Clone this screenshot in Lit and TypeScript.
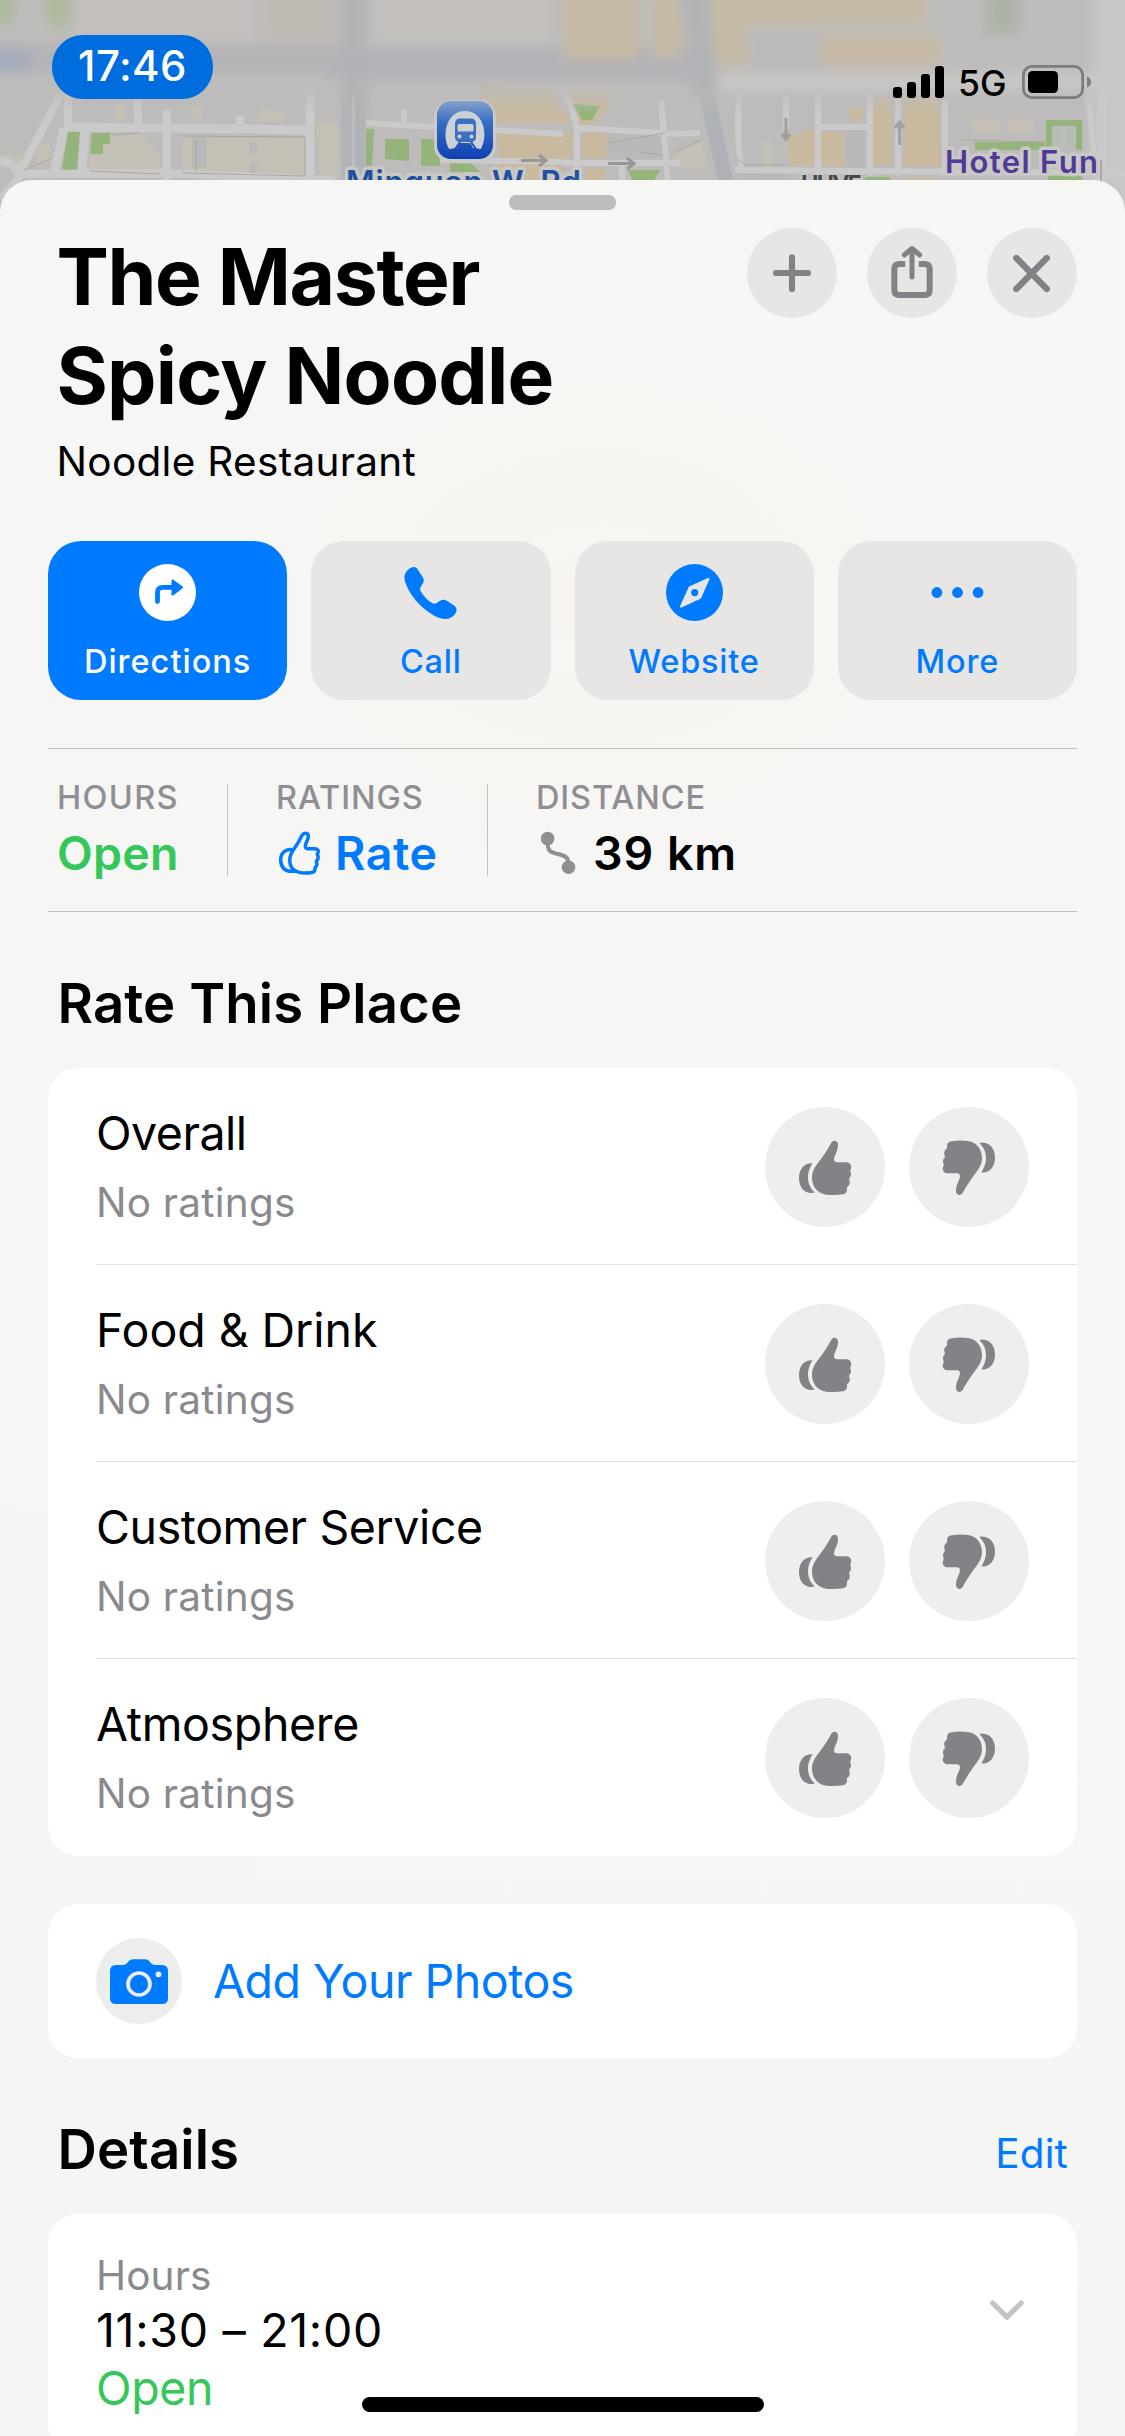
import { LitElement, html, css, svg } from 'lit';
import { customElement, property } from 'lit/decorators.js';

const THUMB = svg`
  <path d="M319 248C323 240 339 239 339 255C339 274 328 285 327 298Q327 306 336 307H364C376 307 381 318 378 326Q375 331 376 334C380 342 378 350 374 353Q371 356 373 360C376 368 374 375 369 379Q364 382 366 386C366 398 361 401 352 403Q330 407 303 404C275 400 261 378 261 352C261 330 275 315 285 301C298 283 310 265 319 248Z"/>
  <path d="M263 310C238 307 222 328 222 354C222 380 236 399 258 399Q266 400 269 397C255 385 249 370 249 352C249 335 256 320 263 310Z"/>`;

const ICONS: Record<string, unknown> = {
  directions: svg`<svg viewBox="138.9 564 57 57" width="57" height="57">
    <circle cx="167.4" cy="592.5" r="28.5" fill="#fff"/>
    <path d="M157.4 601.5V592.5Q157.4 587.4 162.5 587.4H173" fill="none" stroke="#007aff" stroke-width="4.8" stroke-linecap="round"/>
    <path d="M172.6 580.6V594.4L181.8 587.4Z" fill="#007aff" stroke="#007aff" stroke-width="2.4" stroke-linejoin="round"/></svg>`,
  call: svg`<svg viewBox="402.4 564 57 57" width="57" height="57">
    <path fill="#007aff" d="M410 568.5C412.8 566.3 416.3 566.5 418 569.3L423.2 577.2C424.6 579.5 424.6 581.3 423 584L420.9 587.3Q420 589 421 591.2C424.5 597 429 601.5 434 603.7Q436 604.3 437.8 602.6L440 601C442.8 599.2 445.2 599.4 447.6 601L454.8 605.8C457.4 607.8 457.6 611 455.8 613.6C452.3 618.9 446.5 620.3 440 618C430 614.3 419 605.5 411.8 594.5C407.5 588 405 581.5 404.9 578C404.7 574 407 570.6 410 568.5Z"/></svg>`,
  website: svg`<svg viewBox="665.6 564 57 57" width="57" height="57">
    <circle cx="694.1" cy="592.5" r="28.5" fill="#007aff"/>
    <path d="M708 579L689.2 587.6L680.6 606.6L699.6 597.8Z" fill="#e7e6e4" stroke="#e7e6e4" stroke-width="2.2" stroke-linejoin="round"/>
    <circle cx="694.3" cy="592.6" r="3.6" fill="#007aff"/></svg>`,
  more: svg`<svg viewBox="928.5 564 57 57" width="57" height="57" fill="#007aff">
    <circle cx="936.4" cy="592.5" r="5.4"/><circle cx="957" cy="592.5" r="5.4"/><circle cx="977.6" cy="592.5" r="5.4"/></svg>`,
  plus: svg`<svg viewBox="141 84 270 270" width="90" height="90" fill="none" stroke="#828186" stroke-width="18.5" stroke-linecap="round">
    <path d="M228 219H324M276 172V267"/></svg>`,
  share: svg`<svg viewBox="501 84 270 270" width="90" height="90" fill="none" stroke="#828186">
    <path stroke-width="18" d="M615.5 192H599Q583 192 583 208V270Q583 285 599 285H673Q689 285 689 270V208Q689 192 673 192H656.5"/>
    <path stroke-width="15" stroke-linecap="round" stroke-linejoin="round" d="M636 147V231M613 165L636 145.5L659 165"/></svg>`,
  close: svg`<svg viewBox="861 84 270 270" width="90" height="90" fill="none" stroke="#828186" stroke-width="19" stroke-linecap="round">
    <path d="M949 174L1040.500 267M1040.500 174L949 267"/></svg>`,
  thumbUp: svg`<svg viewBox="120 141 360 360" width="120" height="120" fill="#848287">${THUMB}</svg>`,
  thumbDown: svg`<svg viewBox="120 141 360 360" width="120" height="120" fill="#848287"><g transform="rotate(180 300 323.5)">${THUMB}</g></svg>`,
  thumbOutline: svg`<svg viewBox="294 31 129 135" width="43" height="45" fill="none" stroke="#007aff" stroke-width="10.5" stroke-linejoin="round">
    <path d="M366 44C371 36 385 35 385 47C385 58 376 66 376 77Q376 84 383 84H404C414 84 417 91 413 98Q411 101 413 104C416 111 414 116 411 119Q408 122 410 126C412 132 410 136 407 139Q404 141 405 146C405 153 400 156 391 156.500Q370 158 357 155C339 151 329 137 329 118C329 101 338 90 346 79C354 68 361 55 366 44Z"/>
    <path d="M337 87C317 83 302 97 302 118C302 139 315 153 336 152Q342 152 347 151"/></svg>`,
  route: svg`<svg viewBox="541 831 35 44" width="35" height="44">
    <g fill="#8e8e93"><circle cx="547.6" cy="838.600" r="6.8"/><circle cx="568.500" cy="867.300" r="6.8"/></g>
    <path d="M547.6 842C547.6 850.500 550 852 556 853.600C564 855.600 568.700 856.500 568.500 864" fill="none" stroke="#8e8e93" stroke-width="4"/></svg>`,
  camera: svg`<svg viewBox="96 1938 86 86" width="86" height="86">
    <path fill="#007aff" d="M116 1965H123Q125.500 1965 127 1963.200L129 1960.800Q130.500 1959.200 133 1959.200H145Q147.500 1959.200 149 1960.800L151 1963.200Q152.500 1965 155 1965H162Q168 1965 168 1971V1998Q168 2004 162 2004H116Q110 2004 110 1998V1971Q110 1965 116 1965Z"/>
    <circle cx="139" cy="1984" r="11" fill="none" stroke="#ededed" stroke-width="3.700"/>
    <circle cx="158.500" cy="1974.300" r="2.900" fill="#ededed"/></svg>`,
  chevron: svg`<svg viewBox="988 2298 38 25" width="38" height="25" fill="none" stroke="#c4c4c6" stroke-width="5.200" stroke-linecap="round" stroke-linejoin="round">
    <path d="M992.600 2303L1006.900 2317.200L1021.200 2303"/></svg>`,
};

@customElement('map-backdrop')
class MapBackdrop extends LitElement {
  static styles = css`
    :host { display: block; }
    svg { display: block; }
    text { font-family: Inter, sans-serif; font-weight: 600; paint-order: stroke; stroke: #c9c8c5; stroke-width: 7px; stroke-linejoin: round; }
    .small { stroke-width: 3px; font-weight: 700; }
  `;
  render() {
    return html`<svg width="1125" height="230" viewBox="0 0 1125 230">
      <defs>
        <filter id="soft" x="-5%" y="-10%" width="110%" height="120%"><feGaussianBlur stdDeviation="6"/></filter>
        <filter id="light" x="-5%" y="-10%" width="110%" height="120%"><feGaussianBlur stdDeviation="0.6"/></filter>
        <linearGradient id="pin" x1="0" y1="0" x2="0" y2="1"><stop offset="0" stop-color="#86a3cd"/><stop offset=".35" stop-color="#386fc4"/><stop offset="1" stop-color="#0f40b4"/></linearGradient>
        <linearGradient id="fade" x1="0" y1="0" x2="0" y2="1"><stop offset="0" stop-color="#000"/><stop offset=".36" stop-color="#000"/><stop offset=".5" stop-color="#fff"/></linearGradient>
        <mask id="lower"><rect width="1125" height="230" fill="url(#fade)"/></mask>
      </defs>
      <rect width="1125" height="230" fill="#bebcbb"/>
      <g filter="url(#soft)">
        <g fill="#adba9b"><ellipse cx="4" cy="6" rx="10" ry="20"/><ellipse cx="58" cy="8" rx="13" ry="20"/><ellipse cx="432" cy="12" rx="7" ry="12"/></g>
        <rect x="75" y="-10" width="180" height="50" fill="#c2bfbd"/>
        <rect x="268" y="-10" width="72" height="50" fill="#c0bab4"/>
        <rect x="372" y="-10" width="180" height="54" fill="#c2bfbd"/>
        <rect x="-10" y="46" width="340" height="26" fill="#b3b4b7"/>
        <rect x="330" y="48" width="372" height="32" fill="#b1b3b7"/>
        <rect x="-10" y="48" width="40" height="24" fill="#a5acbd"/>
        <g fill="#c6baa5"><rect x="563" y="-10" width="76" height="70"/><rect x="652" y="-10" width="30" height="68"/><rect x="708" y="-10" width="38" height="76"/>
          <rect x="745" y="-10" width="180" height="34"/><rect x="815" y="36" width="125" height="30"/></g>
        <rect x="750" y="30" width="70" height="48" fill="#bcbab9"/>
        <rect x="985" y="-10" width="34" height="44" fill="#acb4a8"/>
        <rect x="710" y="74" width="400" height="15" fill="#c8c8c7"/>
        <rect x="1092" y="-10" width="40" height="250" fill="#c7c7c7"/>
      </g>
      <g filter="url(#soft)" fill="none" stroke="#b0b3b6">
        <path d="M354 -10V120" stroke-width="23"/><path d="M694 -10L706 95" stroke-width="24"/>
      </g>
      <g mask="url(#lower)"><g filter="url(#light)">
        <g fill="#c4c0b5">
          <path d="M110 135L140 133L160 155V173L88 170L90 154H103V144H110ZM182 138L305 137V176L182 173ZM315 122H338V178H320ZM193 108H202V120H193ZM262 108L285 112V122H255ZM115 105H125V120H115ZM35 140L50 145L52 160L38 165ZM0 155H25L18 168H0ZM673 153L702 140L707 170L674 167ZM763 140H772V175H763ZM972 119H1000V133H972ZM1008 119H1034V133H1008Z"/>
        </g>
        <g fill="#bbb9b8"><path d="M192 136H206V168H192ZM250 142H257V155H250ZM250 163H257V176H250ZM845 130H864V168H845ZM740 172H790V182H740ZM592 130L660 134L665 158H608V150H592Z"/></g>
        <g fill="#c8b99f">
          <path d="M475 85L555 88L563 122L495 122ZM498 132H563V182H500ZM568 90H610V108L592 124H580ZM562 102L569 124H562ZM562 133H572V158H562ZM582 133H607V158H582ZM586 168H605V182H586ZM789 137L803 131H814V166H790ZM820 132H844V166H821ZM846 108H862V118L852 122ZM874 98H892V165H872ZM904 98H940V166H904ZM873 178H896V184H873ZM905 178H938V184H905Z"/>
        </g>
        <g fill="#94b47b">
          <path d="M68 131H80L77 170H62ZM92 133H110V144H103V154H90ZM366 129H374L372 166H366ZM385 139H409V161L385 159ZM421 139H440V166H421ZM450 162H470L480 172H450ZM573 104L600 106L592 120H582ZM628 170H660L652 184H634ZM975 142H1045V150H975ZM1046 120H1082V150H1076V126H1052V150H1046ZM866 177H890V184H862ZM1048 170H1082V184H1048Z"/>
        </g>
        <g fill="#b3bdb1"><rect x="1052" y="128" width="8" height="20"/><rect x="1066" y="128" width="9" height="20"/></g>
        <g fill="none" stroke="#cacaca" stroke-linejoin="round">
          <path stroke-width="8" d="M60 95L18 176M0 160Q14 162 18 174L160 173L335 180M22 174L0 200M68 95V126M138 95V126M240 116V130M167 110V180"/>
          <path stroke-width="9" d="M64 127L312 130M310 80V182M85 128L82 172M64 128Q60 150 54 172"/>
          <path stroke-width="6" d="M366 123L563 134M404 110V124M440 160L563 162M562 88Q574 110 577 130V184M577 128L664 133M661 100L668 184M562 163L680 163M735 170L1125 173M740 90Q735 130 742 170M786 95V130M818 95V176M870 95V176M898 95V176M945 100V176M818 127H868M1088 90L1096 176M622 164V184M665 134L700 133"/>
        </g>
        <g fill="none" stroke="#a8a7a6" stroke-width="1">
          <path d="M112 135L140 133M182 136L305 137V176L182 173M90 171L160 174M608 143L665 133M673 153L702 140M737 158L745 165L785 165M962 140L1045 142M640 152L663 155M24 170L52 158M196 140V172"/>
        </g>
        <path d="M353 95L354 190" stroke="#b1b3b6" stroke-width="24" fill="none"/>
        <path d="M353.500 95V190" stroke="#c3c4c5" stroke-width="2" fill="none"/>
        <path d="M706 90Q714 130 728 190" stroke="#aeb1b6" stroke-width="15" fill="none"/>
        <path d="M1102 90V190" stroke="#c9c9c9" stroke-width="9" fill="none"/><path d="M1101 160V184" stroke="#888" stroke-width="1" fill="none"/>
      </g></g>
      <g fill="none" stroke="#989796" stroke-width="3">
        <path d="M521 160.500H545M539 155L546 160.500L539 166M608 163.500H633M627 158L634 163.500L627 169"/>
        <path d="M786 118V138M782 134L786 139L790 134M899.500 145V124M895 128L899.500 122L904 128" opacity=".8"/>
      </g>
      <rect x="434" y="100" width="62" height="63" rx="17" fill="#cccac6" filter="url(#light)"/>
      <rect x="437" y="101" width="56" height="58" rx="14" fill="url(#pin)" filter="url(#light)"/>
      <path d="M449 149C441 134 447 111 465 111C483 111 489 134 481 149L473 148L470 143H460L457 148Z" fill="#ccd1d6"/>
      <path d="M459 118.500H472Q476 119 476 124V137Q476 141 472 142H459Q455 141 455 137V124Q455 119 459 118.500Z" fill="#3f6fc1"/>
      <rect x="457.500" y="124" width="16" height="7.500" rx="1.500" fill="#ccd1d6"/><circle cx="459.500" cy="136.500" r="2" fill="#ccd1d6"/><circle cx="471.500" cy="136.500" r="2" fill="#ccd1d6"/>
      <path d="M460 142L455 149M471 142L476 149" stroke="#1d4fb4" stroke-width="2"/><path d="M459 146H472" stroke="#1d4fb4" stroke-width="1.500"/>
      <text x="346" y="192.500" font-size="31" letter-spacing=".94" fill="#1f4f9f">Minquan W. Rd</text>
      <text x="945" y="172.500" font-size="31" letter-spacing="1.37" fill="#4f3b97">Hotel Fun</text>
      <text class="small" x="801" y="192" font-size="23.500" letter-spacing="-1.900" fill="#44494b">HUVE</text>
    </svg>`;
  }
}

@customElement('status-bar')
class StatusBar extends LitElement {
  static styles = css`
    :host { display: flex; justify-content: space-between; align-items: flex-start; height: 180px; box-sizing: border-box; padding: 35px 34px 0 52px; color: #000; }
    .time { width: 161px; height: 64px; border-radius: 31px; background: #006ddf; color: #fff; font-size: 42px; font-weight: 500; letter-spacing: .42px; line-height: 62px; text-align: center; }
    .right { display: flex; align-items: center; margin-top: 30px; height: 34px; }
    .net { font-size: 35.5px; font-weight: 500; line-height: 38px; margin: 3px 14px 0 14px; width: 50px; }
    svg { display: block; }
  `;
  render() {
    return html`<div class="time">17:46</div>
      <div class="right">
        <svg width="51" height="34" viewBox="893 65 51 34"><rect x="893" y="87" width="9" height="11" rx="3"/><rect x="907" y="82" width="9" height="16" rx="3"/><rect x="921" y="74" width="9" height="24" rx="3"/><rect x="935" y="66" width="9" height="32" rx="3"/></svg>
        <div class="net">5G</div>
        <svg width="69" height="34" viewBox="1022 65 69 34"><rect x="1023.400" y="66.400" width="59.300" height="31.200" rx="8.500" fill="none" stroke="#7d7c7b" stroke-width="2.800"/><rect x="1028" y="71" width="30" height="22" rx="4.500"/><path d="M1087 76.500Q1091 78 1091 82Q1091 86 1087 87.500Z" fill="#7d7c7b"/></svg>
      </div>`;
  }
}

@customElement('rating-row')
class RatingRow extends LitElement {
  @property() label = '';
  @property() spacing = '0';
  static styles = css`
    :host { display: flex; justify-content: space-between; height: 197px; box-sizing: border-box; margin-left: 48px; padding-right: 48px; border-bottom: 1px solid #e0e0e1; }
    :host(:last-of-type) { border-bottom-color: transparent; }
    .text { padding-top: 30px; line-height: 70px; }
    .name { font-size: 46.5px; color: #000; }
    .sub { font-size: 40.5px; letter-spacing: .22px; color: #8a8a8e; }
    .votes { display: flex; gap: 24px; padding-top: 39px; }
    .vote { width: 120px; height: 120px; border-radius: 50%; background: #eee; }
    svg { display: block; }
  `;
  render() {
    return html`<div class="text"><div class="name" style="letter-spacing:${this.spacing}px">${this.label}</div><div class="sub">No ratings</div></div>
      <div class="votes"><div class="vote">${ICONS.thumbUp}</div><div class="vote">${ICONS.thumbDown}</div></div>`;
  }
}

@customElement('app-root')
class AppRoot extends LitElement {
  static styles = css`
    :host { display: block; position: relative; width: 1125px; height: 2436px; overflow: hidden; font-family: Inter, "Liberation Sans", sans-serif; color: #000; }
    svg { display: block; }
    .map { position: absolute; left: 0; top: 0; }
    status-bar { position: relative; }
    .sheet { position: relative; box-sizing: border-box; height: 2256px; padding: 15px 48px 0; border-radius: 32px 32px 0 0;
      background: radial-gradient(420px 300px at 600px 420px, #f8f5f1, rgba(248,245,241,0)), radial-gradient(260px 420px at 0 1700px, #f3f6f2, rgba(243,246,242,0)), linear-gradient(#f6f6f4, #f6f6f4 50%, #f5f5f3); }
    .grabber { width: 107px; height: 15px; margin: 0 auto; border-radius: 7px; background: #bcbcbb; }
    .head { display: flex; justify-content: space-between; padding: 17px 0 0 8.500px; height: 276px; box-sizing: border-box; }
    .title { font-size: 78.5px; font-weight: 700; line-height: 99px; }
    .l1 { letter-spacing: -1.34px; }
    .l2 { letter-spacing: -.79px; }
    .kind { font-size: 40.5px; line-height: 49px; letter-spacing: .3px; margin-top: 12px; }
    .tools { display: flex; gap: 30px; padding-top: 1px; }
    .tool { width: 90px; height: 90px; border-radius: 50%; background: #e6e6e6; }
    .actions { display: grid; grid-template-columns: repeat(4, 1fr); gap: 24px; margin-top: 55px; }
    .action { display: flex; flex-direction: column; align-items: center; gap: 21px; height: 159px; box-sizing: border-box; padding-top: 23px; border-radius: 33px; background: #e7e6e4; color: #007aff; font-size: 32.5px; font-weight: 550; line-height: 39px; letter-spacing: .8px; }
    .primary { background: #007aff; color: #fff; letter-spacing: 1px; }
    .stats { display: flex; margin-top: 48px; height: 164px; box-sizing: border-box; border-top: 1px solid #c0c0bf; border-bottom: 1px solid #c0c0bf; padding: 35px 0 35px 9px; }
    .stat { display: flex; flex-direction: column; gap: 19px; }
    .stat + .stat { border-left: 1px solid #c3c3c2; padding-left: 48px; }
    .hours { width: 170px; }
    .ratings { width: 211px; }
    .cap { font-size: 32.5px; font-weight: 500; line-height: 27px; letter-spacing: .9px; color: #8e8e93; }
    .hours .cap { letter-spacing: 1.32px; }
    .val { display: flex; align-items: center; height: 46px; font-size: 46.5px; font-weight: 600; line-height: 46px; letter-spacing: .25px; }
    .hours .val { padding-bottom: 1px; height: 45px; }
    .ratings .val { gap: 14px; letter-spacing: .6px; color: #007aff; }
    .ratings .val svg { margin-left: 2px; }
    .distance .val { gap: 17px; letter-spacing: .95px; }
    .distance .val svg { margin-left: 5px; }
    .green { color: #34c759; }
    h2 { margin: 0; font-size: 54.5px; line-height: 66px; font-weight: 600; letter-spacing: .1px; }
    .sec { display: flex; justify-content: space-between; align-items: flex-start; height: 156px; box-sizing: border-box; padding: 58px 9px 0 9.500px; }
    .edit { font-size: 40.5px; line-height: 76px; letter-spacing: .12px; color: #007aff; }
    .card { background: #fff; border-radius: 30px; }
    .photos { display: flex; align-items: center; gap: 31px; height: 154px; margin-top: 48px; padding-left: 48px; font-size: 46.5px; letter-spacing: -.5px; color: #007aff; }
    .cam { width: 86px; height: 86px; border-radius: 50%; background: #ededed; }
    .details { display: flex; justify-content: space-between; box-sizing: border-box; height: 240px; padding: 37px 51px 0 48px; }
    .hl { font-size: 40.5px; line-height: 49px; letter-spacing: .11px; color: #8a8a8e; }
    .ht { font-size: 46.5px; line-height: 60px; letter-spacing: .69px; }
    .ho { font-size: 46.5px; line-height: 56px; letter-spacing: -.38px; }
    .chev { padding-top: 47px; }
    .home { position: absolute; left: 362px; top: 2397px; width: 402px; height: 15px; border-radius: 8px; background: #000; }
  `;

  private rows: [string, string][] = [['Overall', '-0.5'], ['Food & Drink', '-0.05'], ['Customer Service', '-0.41'], ['Atmosphere', '-0.35']];

  render() {
    return html`
      <map-backdrop class="map"></map-backdrop>
      <status-bar></status-bar>
      <main class="sheet">
        <div class="grabber"></div>
        <header class="head">
          <div>
            <div class="title"><div class="l1">The Master</div><div class="l2">Spicy Noodle</div></div>
            <div class="kind">Noodle Restaurant</div>
          </div>
          <div class="tools"><div class="tool">${ICONS.plus}</div><div class="tool">${ICONS.share}</div><div class="tool">${ICONS.close}</div></div>
        </header>
        <div class="actions">
          <div class="action primary">${ICONS.directions}<span>Directions</span></div>
          <div class="action">${ICONS.call}<span>Call</span></div>
          <div class="action">${ICONS.website}<span>Website</span></div>
          <div class="action">${ICONS.more}<span>More</span></div>
        </div>
        <div class="stats">
          <div class="stat hours"><div class="cap">HOURS</div><div class="val green">Open</div></div>
          <div class="stat ratings"><div class="cap">RATINGS</div><div class="val">${ICONS.thumbOutline}<span>Rate</span></div></div>
          <div class="stat distance"><div class="cap">DISTANCE</div><div class="val">${ICONS.route}<span>39 km</span></div></div>
        </div>
        <div class="sec"><h2>Rate This Place</h2></div>
        <section class="card">
          ${this.rows.map(([l, s]) => html`<rating-row label=${l} spacing=${s}></rating-row>`)}
        </section>
        <section class="card photos"><div class="cam">${ICONS.camera}</div><span>Add Your Photos</span></section>
        <div class="sec"><h2>Details</h2><span class="edit">Edit</span></div>
        <section class="card details">
          <div><div class="hl">Hours</div><div class="ht">11:30 – 21:00</div><div class="ho green">Open</div></div>
          <div class="chev">${ICONS.chevron}</div>
        </section>
      </main>
      <div class="home"></div>`;
  }
}
